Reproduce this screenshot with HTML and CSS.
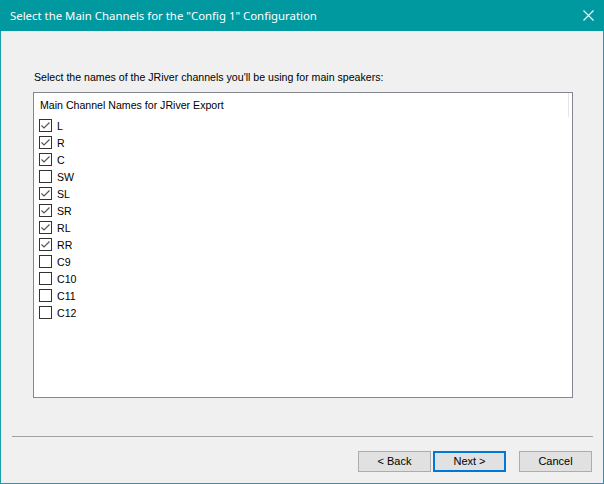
FILE: index.html
```html
<!DOCTYPE html>
<html>
<head>
<meta charset="utf-8">
<link rel="stylesheet" href="styles.css">
</head>
<body>
<div class="window">
  <div class="titlebar">
    <span class="title">Select the Main Channels for the "Config 1" Configuration</span>
    <svg class="close" width="11" height="11" viewBox="0 0 11 11"><path d="M0.5 0.5 L10.5 10.5 M10.5 0.5 L0.5 10.5" stroke="#fff" stroke-width="1.1" fill="none"/></svg>
  </div>
  <div class="content">
    <div class="prompt">Select the names of the JRiver channels you'll be using for main speakers:</div>
    <div class="listbox">
      <div class="header"><span class="header-text">Main Channel Names for JRiver Export</span></div>
      <div class="rows">
        <div class="row"><span class="cb checked"><svg width="11" height="11" viewBox="0 0 11 11"><path d="M1.5 5.5 L4 8 L9.5 2.5" stroke="#555" stroke-width="1.2" fill="none"/></svg></span><span>L</span></div>
        <div class="row"><span class="cb checked"><svg width="11" height="11" viewBox="0 0 11 11"><path d="M1.5 5.5 L4 8 L9.5 2.5" stroke="#555" stroke-width="1.2" fill="none"/></svg></span><span>R</span></div>
        <div class="row"><span class="cb checked"><svg width="11" height="11" viewBox="0 0 11 11"><path d="M1.5 5.5 L4 8 L9.5 2.5" stroke="#555" stroke-width="1.2" fill="none"/></svg></span><span>C</span></div>
        <div class="row"><span class="cb"></span><span>SW</span></div>
        <div class="row"><span class="cb checked"><svg width="11" height="11" viewBox="0 0 11 11"><path d="M1.5 5.5 L4 8 L9.5 2.5" stroke="#555" stroke-width="1.2" fill="none"/></svg></span><span>SL</span></div>
        <div class="row"><span class="cb checked"><svg width="11" height="11" viewBox="0 0 11 11"><path d="M1.5 5.5 L4 8 L9.5 2.5" stroke="#555" stroke-width="1.2" fill="none"/></svg></span><span>SR</span></div>
        <div class="row"><span class="cb checked"><svg width="11" height="11" viewBox="0 0 11 11"><path d="M1.5 5.5 L4 8 L9.5 2.5" stroke="#555" stroke-width="1.2" fill="none"/></svg></span><span>RL</span></div>
        <div class="row"><span class="cb checked"><svg width="11" height="11" viewBox="0 0 11 11"><path d="M1.5 5.5 L4 8 L9.5 2.5" stroke="#555" stroke-width="1.2" fill="none"/></svg></span><span>RR</span></div>
        <div class="row"><span class="cb"></span><span>C9</span></div>
        <div class="row"><span class="cb"></span><span>C10</span></div>
        <div class="row"><span class="cb"></span><span>C11</span></div>
        <div class="row"><span class="cb"></span><span>C12</span></div>
      </div>
    </div>
    <div class="separator"></div>
    <div class="buttons">
      <button class="btn">&lt; Back</button>
      <button class="btn default">Next &gt;</button>
      <button class="btn cancel">Cancel</button>
    </div>
  </div>
</div>
</body>
</html>
```
FILE: styles.css
```css
html, body {
  margin: 0;
  padding: 0;
  background: #f0f0f0;
}
body {
  font-family: "Liberation Sans", Arial, sans-serif;
  font-size: 10.6px;
  color: #000;
}
.window {
  width: 604px;
  height: 484px;
  box-sizing: border-box;
  border: 1px solid #18a0a8;
  border-top: none;
  background: #f0f0f0;
  display: flex;
  flex-direction: column;
}
.titlebar {
  height: 31px;
  margin: 0 -1px;
  background: #00999f;
  color: #fff;
  display: flex;
  align-items: center;
  padding-left: 10px;
  padding-right: 10px;
  flex-shrink: 0;
}
.title {
  font-family: "Noto Sans", "Open Sans", sans-serif;
  font-size: 11.4px;
  line-height: 16px;
}
.close {
  margin-left: auto;
}
.content {
  display: flex;
  flex-direction: column;
  flex: 1;
}
.prompt {
  margin-top: 38px;
  margin-left: 33px;
  line-height: 16px;
  height: 16px;
}
.listbox {
  margin-top: 7px;
  margin-left: 32px;
  width: 540px;
  height: 306px;
  box-sizing: border-box;
  border: 1px solid #828790;
  background: #fff;
}
.header {
  height: 24px;
  display: flex;
  align-items: center;
  padding-left: 6px;
  width: 535px;
  box-sizing: border-box;
  border-right: 1px solid #e5e5e5;
}
.rows {
  display: flex;
  flex-direction: column;
}
.row {
  height: 17px;
  display: flex;
  align-items: center;
  padding-left: 5px;
  line-height: 16px;
}
.cb {
  width: 13px;
  height: 13px;
  box-sizing: border-box;
  border: 1px solid #333;
  background: #fff;
  margin-right: 5px;
  display: flex;
  align-items: center;
  justify-content: center;
}
.separator {
  margin-top: 38px;
  margin-left: 11px;
  width: 581px;
  height: 1px;
  background: #a0a0a0;
}
.buttons {
  display: flex;
  justify-content: flex-end;
  padding-right: 11px;
  margin-top: 14px;
}
.btn {
  width: 73px;
  height: 21px;
  box-sizing: border-box;
  border: 1px solid #adadad;
  background: #e1e1e1;
  font-family: "Liberation Sans", Arial, sans-serif;
  font-size: 11px;
  color: #000;
  padding: 0;
  margin: 0;
  line-height: 17px;
}
.btn.default {
  border: 2px solid #0078d7;
  margin-left: 2px;
}
.btn.cancel {
  margin-left: 13px;
}
```
